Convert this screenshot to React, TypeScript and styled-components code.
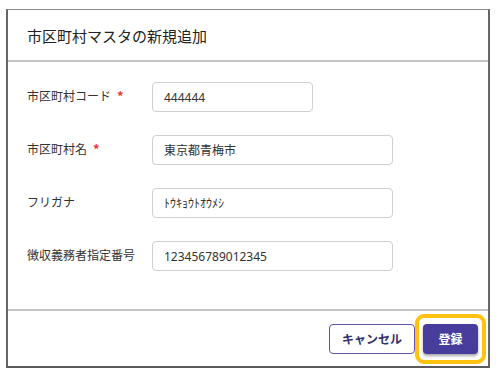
import React from "react";
import styled, { createGlobalStyle } from "styled-components";

const Global = createGlobalStyle`
  html, body { margin: 0; padding: 0; background: #ffffff; }
  body { font-family: "Noto Sans", "Noto Sans CJK JP", sans-serif; color: #222; }
`;

const Page = styled.div`
  padding: 9px 0 0 6px;
`;

const Dialog = styled.div`
  box-sizing: border-box;
  width: 484px;
  height: 359px;
  display: flex;
  flex-direction: column;
  background: #fff;
  border-top: 1px solid #8c8c8c;
  border-left: 2px solid #666;
  border-right: 2px solid #666;
  border-bottom: 2px solid #5a5a5a;
`;

const Header = styled.div`
  height: 50px;
  display: flex;
  align-items: center;
  padding-left: 19px;
  border-bottom: 2px solid #c4c4c4;
  flex-shrink: 0;
`;

const Title = styled.h2`
  margin: 0;
  font-family: "Noto Sans CJK JP", sans-serif;
  font-size: 15px;
  font-weight: 400;
  color: #222;
`;

const Body = styled.div`
  flex: 1;
  display: grid;
  grid-template-columns: 125px 1fr;
  grid-auto-rows: 30px;
  row-gap: 23px;
  align-content: start;
  padding: 20px 0 0 19px;
`;

const Label = styled.label`
  display: flex;
  align-items: center;
  gap: 6px;
  font-family: "Noto Sans CJK JP", sans-serif;
  font-size: 12px;
  color: #333;
  padding-bottom: 4px;
`;

const Required = styled.span`
  color: #e53935;
  font-weight: 700;
  font-size: 13px;
`;

const Input = styled.input<{ $w: number }>`
  box-sizing: border-box;
  width: ${(p) => p.$w}px;
  height: 30px;
  border: 1px solid #d0d0d0;
  border-radius: 4px;
  padding: 0 11px;
  font-family: "Noto Sans", "Noto Sans CJK JP", sans-serif;
  font-size: 12px;
  color: #333;
  background: #fff;
  outline: none;
`;

const Footer = styled.div`
  height: 55px;
  flex-shrink: 0;
  border-top: 2px solid #c4c4c4;
  display: flex;
  align-items: center;
  justify-content: flex-end;
  gap: 0;
  padding-right: 2px;
`;

const CancelButton = styled.button`
  box-sizing: border-box;
  width: 86px;
  height: 30px;
  border-radius: 4px;
  font-family: "Noto Sans CJK JP", sans-serif;
  font-size: 12px;
  font-weight: 700;
  padding: 0;
  background: #fff;
  color: #34326f;
  border: 1px solid #5d56a8;
`;

const FocusRing = styled.div`
  padding: 6px 4px;
  border: 4px solid #ffc20e;
  border-radius: 9px;
  display: flex;
`;

const PrimaryButton = styled.button`
  box-sizing: border-box;
  width: 55px;
  height: 30px;
  border-radius: 4px;
  background: #463d9c;
  color: #fff;
  border: none;
  box-shadow: 0 2px 3px rgba(0, 0, 0, 0.35);
  font-family: "Noto Sans CJK JP", sans-serif;
  font-size: 12px;
  font-weight: 700;
  padding: 0;
`;

const fields = [
  { label: "市区町村コード", req: true, value: "444444", w: 161 },
  { label: "市区町村名", req: true, value: "東京都青梅市", w: 241 },
  { label: "フリガナ", req: false, value: "ﾄｳｷｮｳﾄｵｳﾒｼ", w: 241 },
  { label: "徴収義務者指定番号", req: false, value: "123456789012345", w: 241 },
];

export default function App() {
  return (
    <Page>
      <Global />
      <Dialog>
        <Header>
          <Title>市区町村マスタの新規追加</Title>
        </Header>
        <Body>
          {fields.map((f) => (
            <React.Fragment key={f.label}>
              <Label>
                {f.label}
                {f.req && <Required>*</Required>}
              </Label>
              <div>
                <Input $w={f.w} defaultValue={f.value} />
              </div>
            </React.Fragment>
          ))}
        </Body>
        <Footer>
          <CancelButton>キャンセル</CancelButton>
          <FocusRing>
            <PrimaryButton>登録</PrimaryButton>
          </FocusRing>
        </Footer>
      </Dialog>
    </Page>
  );
}
